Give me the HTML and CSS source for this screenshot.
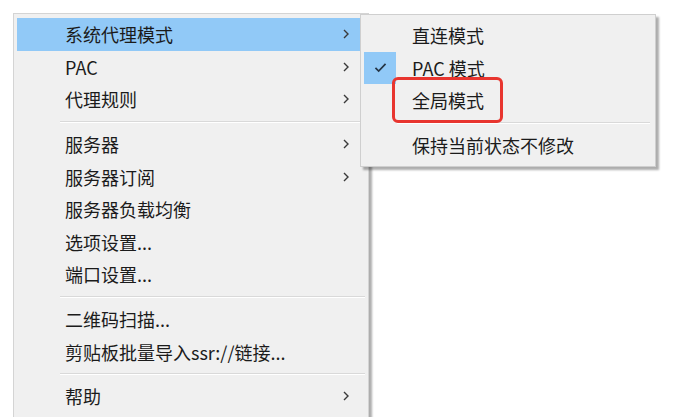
FILE: index.html
```html
<!DOCTYPE html>
<html lang="zh-CN">
<head>
<meta charset="utf-8">
<link rel="stylesheet" href="styles.css">
</head>
<body>
<div class="stage">
  <div class="menu main">
    <div class="item active"><span class="label">系统代理模式</span><svg class="arrow" viewBox="0 0 6 10"><path d="M1 1 L5 5 L1 9"/></svg></div>
    <div class="item"><span class="label">PAC</span><svg class="arrow" viewBox="0 0 6 10"><path d="M1 1 L5 5 L1 9"/></svg></div>
    <div class="item"><span class="label">代理规则</span><svg class="arrow" viewBox="0 0 6 10"><path d="M1 1 L5 5 L1 9"/></svg></div>
    <div class="sep"></div>
    <div class="item"><span class="label">服务器</span><svg class="arrow" viewBox="0 0 6 10"><path d="M1 1 L5 5 L1 9"/></svg></div>
    <div class="item"><span class="label">服务器订阅</span><svg class="arrow" viewBox="0 0 6 10"><path d="M1 1 L5 5 L1 9"/></svg></div>
    <div class="item"><span class="label">服务器负载均衡</span></div>
    <div class="item"><span class="label">选项设置...</span></div>
    <div class="item"><span class="label">端口设置...</span></div>
    <div class="sep"></div>
    <div class="item"><span class="label">二维码扫描...</span></div>
    <div class="item"><span class="label">剪贴板批量导入ssr://链接...</span></div>
    <div class="sep"></div>
    <div class="item"><span class="label">帮助</span><svg class="arrow" viewBox="0 0 6 10"><path d="M1 1 L5 5 L1 9"/></svg></div>
  </div>

  <div class="menu sub">
    <div class="sitem"><span class="check"></span><span class="label">直连模式</span></div>
    <div class="sitem"><span class="check on"><svg viewBox="0 0 14 12"><path d="M1.5 6.5 L5 10 L12.5 2"/></svg></span><span class="label">PAC 模式</span></div>
    <div class="sitem"><span class="check"></span><span class="label">全局模式</span></div>
    <div class="ssep"></div>
    <div class="sitem"><span class="check"></span><span class="label">保持当前状态不修改</span></div>
    <div class="mark"></div>
  </div>
</div>
</body>
</html>
```

FILE: styles.css
```css
html, body {
  margin: 0;
  padding: 0;
  background: #ffffff;
  overflow: hidden;
}

body {
  font-family: "Noto Sans CJK SC", "Noto Sans", sans-serif;
  font-size: 18px;
  color: #1b1b1b;
}

.stage {
  position: relative;
  width: 678px;
  height: 417px;
  padding: 13px 0 0 13px;
  box-sizing: border-box;
  overflow: hidden;
}

.menu {
  background: #f0f0f0;
  box-sizing: border-box;
}

.main {
  width: 356px;
  border: 1px solid #d4d4d4;
  padding: 4px 3px 24px 3px;
  box-shadow: 3px 3px 2px rgba(0, 0, 0, 0.32);
}

.item {
  height: 32.6px;
  display: flex;
  align-items: center;
  padding-left: 48px;
  padding-right: 16px;
}

.item.active {
  background: #91c9f7;
}

.label {
  white-space: nowrap;
  line-height: 1;
}

.arrow {
  margin-left: auto;
  width: 6px;
  height: 10px;
  fill: none;
  stroke: #3a3a3a;
  stroke-width: 1.4;
}

.sep {
  height: 12px;
  margin-left: 43px;
  background: linear-gradient(to bottom, transparent 5px, #d9d9d9 5px, #d9d9d9 6px, #ffffff 6px, #ffffff 7px, transparent 7px);
}

.sub {
  position: absolute;
  left: 360px;
  top: 14px;
  width: 296px;
  border: 1px solid #cfcfcf;
  padding: 4px 3px 5px 3px;
  box-shadow: 3px 3px 2px rgba(0, 0, 0, 0.32);
}

.sitem {
  height: 32.6px;
  display: flex;
  align-items: center;
}

.check {
  width: 32px;
  height: 32.6px;
  margin-right: 16px;
  display: flex;
  align-items: center;
  justify-content: center;
}

.check.on {
  background: #91c9f7;
}

.check svg {
  width: 13px;
  height: 11px;
  fill: none;
  stroke: #253545;
  stroke-width: 1.8;
}

.ssep {
  height: 12px;
  margin-left: 33px;
  margin-right: 2px;
  background: linear-gradient(to bottom, transparent 5px, #d9d9d9 5px, #d9d9d9 6px, #ffffff 6px, #ffffff 7px, transparent 7px);
}

.mark {
  position: absolute;
  left: 31px;
  top: 62px;
  width: 111px;
  height: 46px;
  box-sizing: border-box;
  border: 3.5px solid #e8352f;
  border-radius: 6px;
}
```
